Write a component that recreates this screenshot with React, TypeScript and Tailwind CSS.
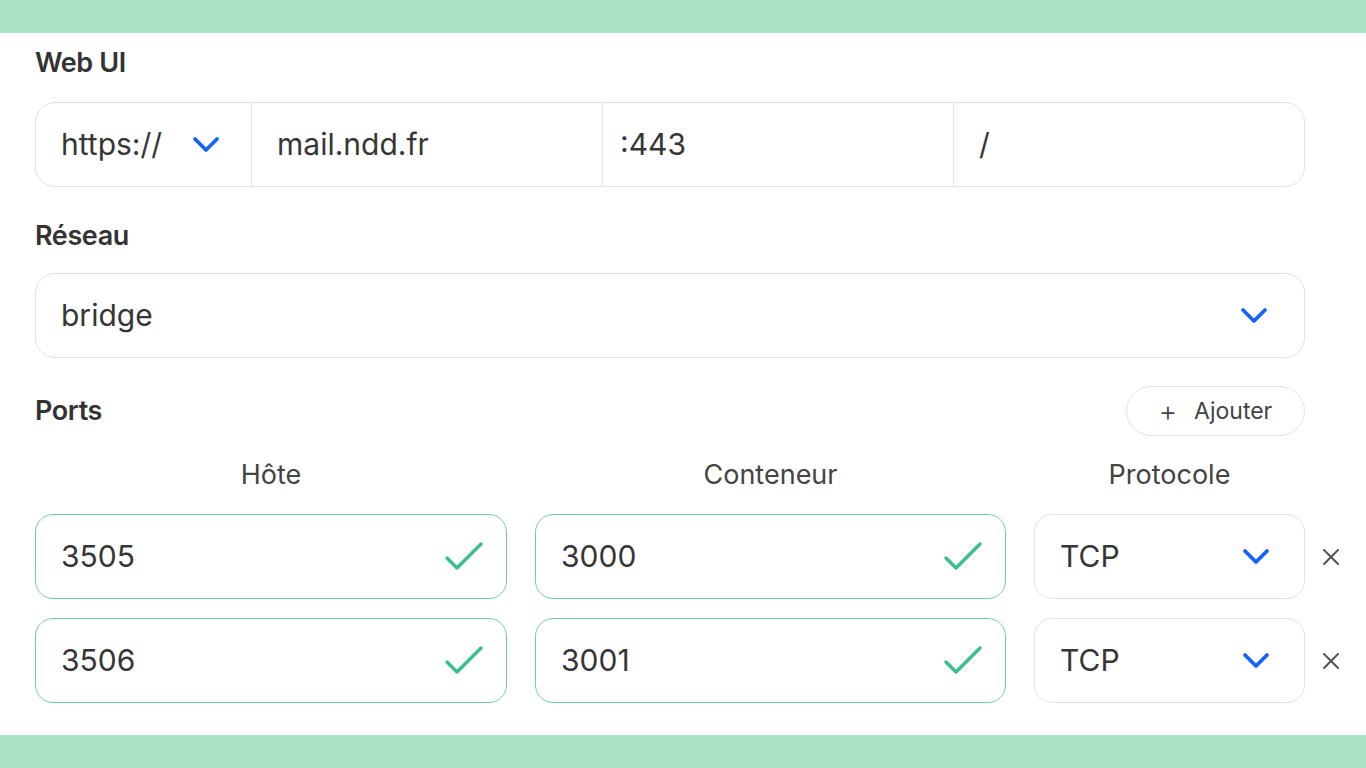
import React from 'react';

const font = { fontFamily: 'Inter, "Noto Sans", sans-serif' };

const Chevron: React.FC = () => (
  <svg width="28" height="18" viewBox="0 0 28 18" fill="none">
    <polyline points="3,3 14,14 25,3" stroke="#1463ff" strokeWidth="3.8" strokeLinecap="round" strokeLinejoin="round" />
  </svg>
);

const Check: React.FC = () => (
  <svg width="40" height="32" viewBox="0 0 40 32" fill="none">
    <polyline points="3,17 13,27 37,3" stroke="#3dbf8a" strokeWidth="3.5" strokeLinecap="round" strokeLinejoin="round" />
  </svg>
);

const Cross: React.FC = () => (
  <svg width="20" height="20" viewBox="0 0 20 20" fill="none">
    <path d="M3 3 L17 17 M17 3 L3 17" stroke="#555" strokeWidth="2" strokeLinecap="round" />
  </svg>
);

interface PortRow {
  host: string;
  container: string;
  protocol: string;
}

const ports: PortRow[] = [
  { host: '3505', container: '3000', protocol: 'TCP' },
  { host: '3506', container: '3001', protocol: 'TCP' },
];

const Label: React.FC<{ children: React.ReactNode }> = ({ children }) => (
  <div className="h-8 flex items-center text-[27px] font-semibold tracking-[-0.4px] text-[#333]">{children}</div>
);

export default function App() {
  return (
    <div className="h-[768px] w-[1366px] flex flex-col bg-white text-[#363636]" style={font}>
      <div className="h-[33px] bg-[#abe3c9]" />
      <main className="flex-1 pl-[35px]">
        <div className="mt-[14px]">
          <Label>Web UI</Label>
        </div>

        <div className="mt-[23px] w-[1270px] h-[85px] flex rounded-[20px] border border-[#e2e2e2] text-[30px]">
          <div className="w-[216px] flex items-center justify-between pl-[25px] pr-[31px] border-r border-[#e2e2e2]">
            <span>https://</span>
            <Chevron />
          </div>
          <div className="w-[351px] flex items-center pl-[25px] border-r border-[#e2e2e2]">mail.ndd.fr</div>
          <div className="w-[351px] flex items-center pl-[17px] border-r border-[#e2e2e2]">:443</div>
          <div className="flex-1 flex items-center pl-[25px]">/</div>
        </div>

        <div className="mt-[33px]">
          <Label>Réseau</Label>
        </div>

        <div className="mt-[21px] w-[1270px] h-[85px] flex items-center justify-between rounded-[20px] border border-[#e2e2e2] pl-[25px] pr-[36px] text-[30px]">
          <span>bridge</span>
          <Chevron />
        </div>

        <div className="mt-[28px] w-[1270px] h-[50px] flex items-center justify-between">
          <Label>Ports</Label>
          <button className="h-[50px] w-[179px] flex items-center justify-center gap-[17px] rounded-full border border-[#e2e2e2] text-[23px] text-[#444]">
            <span className="text-[28px] font-light leading-none">+</span>
            <span>Ajouter</span>
          </button>
        </div>

        <div className="mt-[19px] w-[1270px] h-8 grid grid-cols-[472px_471px_271px] gap-x-[28px] text-[27px] text-[#444]">
          <div className="text-center">Hôte</div>
          <div className="text-center">Conteneur</div>
          <div className="text-center">Protocole</div>
        </div>

        <div className="mt-[27px] flex flex-col gap-[19px]">
          {ports.map((p) => (
            <div key={p.host} className="flex items-center">
              <div className="w-[1270px] grid grid-cols-[472px_471px_271px] gap-x-[28px] text-[30px]">
                <div className="h-[85px] flex items-center justify-between rounded-[18px] border border-[#6fcfa5] pl-[25px] pr-[22px]">
                  <span>{p.host}</span>
                  <Check />
                </div>
                <div className="h-[85px] flex items-center justify-between rounded-[18px] border border-[#6fcfa5] pl-[25px] pr-[22px]">
                  <span>{p.container}</span>
                  <Check />
                </div>
                <div className="h-[85px] flex items-center justify-between rounded-[18px] border border-[#e2e2e2] pl-[25px] pr-[34px]">
                  <span>{p.protocol}</span>
                  <Chevron />
                </div>
              </div>
              <div className="ml-[16px]">
                <Cross />
              </div>
            </div>
          ))}
        </div>
      </main>
      <div className="h-[33px] bg-[#abe3c9]" />
    </div>
  );
}
